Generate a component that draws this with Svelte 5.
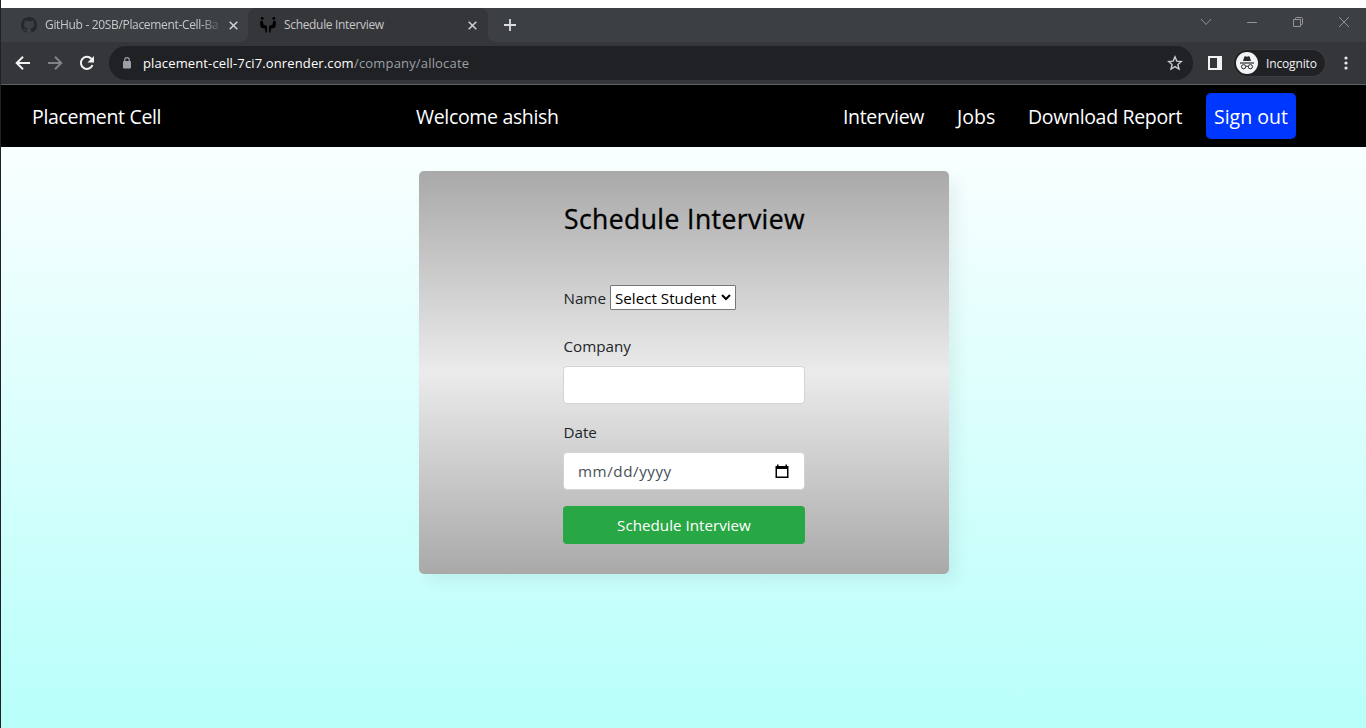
<script>
  const links = [
    { label: 'Interview', width: 81, gap: 0 },
    { label: 'Jobs', width: 40, gap: 31 },
    { label: 'Download Report', width: 155, gap: 32 }
  ];
</script>

<div class="window">
  <header class="chrome">
    <div class="tabstrip">
      <div class="tab first">
        <svg class="favicon" width="16" height="16" viewBox="0 0 16 16"><path fill="#24292e" d="M8 0C3.58 0 0 3.58 0 8c0 3.54 2.29 6.53 5.47 7.59.4.07.55-.17.55-.38v-1.49c-2.01.37-2.53-.49-2.69-.94-.09-.23-.48-.94-.82-1.13-.28-.15-.68-.52-.01-.53.63-.01 1.08.58 1.23.82.72 1.21 1.87.87 2.33.66.07-.52.28-.87.51-1.07-1.78-.2-3.64-.89-3.64-3.95 0-.87.31-1.59.82-2.15-.08-.2-.36-1.02.08-2.12 0 0 .67-.21 2.2.82a7.4 7.4 0 0 1 4 0c1.53-1.04 2.2-.82 2.2-.82.44 1.1.16 1.92.08 2.12.51.56.82 1.27.82 2.15 0 3.07-1.87 3.75-3.65 3.95.29.25.54.73.54 1.48v2.2c0 .21.15.46.55.38A8 8 0 0 0 16 8c0-4.42-3.58-8-8-8Z"/></svg>
        <span class="tabtitle faded">GitHub - 20SB/Placement-Cell-Ba</span>
        <svg class="close" width="9" height="9" viewBox="0 0 9 9"><path d="m.7.7 7.6 7.6m0-7.6L.7 8.3" fill="none" stroke="#d0d2d4" stroke-width="1.5"/></svg>
      </div>
      <div class="tab active">
        <svg class="favicon" width="16" height="16" viewBox="0 0 16 16"><g fill="#000"><circle cx="2.2" cy="1.5" r="1.4"/><path d="M.1 4.500Q1.600 3 2.800 4.300L3.700 8l2.500.5.7 1v6H5.600L5 11.500l-3-.5Q.3 10.500.1 7Z"/><circle cx="13.800" cy="1.500" r="1.400"/><path d="M15.900 4.500Q14.400 3 13.200 4.300L12.300 8l-2.500.5-.7 1v6h1.300l.6-4 3-.5q1.700-.5 1.900-4Z"/></g></svg>
        <span class="tabtitle second">Schedule Interview</span>
        <svg class="close" width="9" height="9" viewBox="0 0 9 9"><path d="m.7.7 7.6 7.6m0-7.6L.7 8.3" fill="none" stroke="#d0d2d4" stroke-width="1.5"/></svg>
      </div>
      <div class="rest">
        <svg class="plus" width="12" height="12" viewBox="0 0 12 12"><path d="M6 0v12M0 6h12" fill="none" stroke="#dadce0" stroke-width="1.8"/></svg>
        <div class="controls">
          <svg width="12" height="12" viewBox="0 0 12 12"><path d="m1 3 5 5.500L11 3"/></svg>
          <svg width="12" height="12" viewBox="0 0 12 12"><path d="M1 6.500h10"/></svg>
          <svg width="12" height="12" viewBox="0 0 12 12"><path d="M1.500 3.500h7v7h-7zM3.500 3V2.200q0-.7.7-.7h5q1.300 0 1.300 1.300v5q0 .700-.7.700H9"/></svg>
          <svg width="12" height="12" viewBox="0 0 12 12"><path d="m1 1 10 10M11 1 1 11"/></svg>
        </div>
      </div>
    </div>
    <div class="toolbar">
      <svg class="back" width="16" height="16" viewBox="0 0 16 16"><path d="M15 8H2m6-6.300L1.700 8 8 14.300" fill="none" stroke="#f1f3f4" stroke-width="2"/></svg>
      <svg class="forward" width="16" height="16" viewBox="0 0 16 16"><path d="M1 8h13M8 1.700 14.300 8 8 14.300" fill="none" stroke="#808286" stroke-width="2"/></svg>
      <svg class="reload" width="16" height="16" viewBox="0 0 16 16"><path d="M13.500 10A6 6 0 1 1 12.300 3.800L14 5.500" fill="none" stroke="#f1f3f4" stroke-width="2"/><path d="M15 1v6.500H8.500Z" fill="#f1f3f4"/></svg>
      <div class="omnibox">
        <svg class="lock" width="10" height="12" viewBox="0 0 10 12"><rect x="1" y="4" width="8" height="7.500" rx="1" fill="#9aa0a6"/><path d="M2.700 4.500V3a2.300 2.300 0 0 1 4.600 0v1.500" fill="none" stroke="#9aa0a6" stroke-width="1.200"/></svg>
        <span class="host">placement-cell-7ci7.onrender.com</span><span class="path">/company/allocate</span>
        <svg class="star" width="16" height="16" viewBox="0 0 16 16"><path d="m8 1.800 1.800 4.300 4.600.4-3.500 3 1.100 4.600-4-2.500-4 2.500 1.100-4.600-3.500-3 4.600-.4Z" fill="none" stroke="#c8cacd" stroke-width="1.400"/></svg>
      </div>
      <svg class="panel" width="14" height="14" viewBox="0 0 14 14"><path fill="#f1f3f4" fill-rule="evenodd" d="M0 0h14v14H0ZM2 2v10h7V2Z"/></svg>
      <div class="incognito">
        <svg width="22" height="22" viewBox="0 0 22 22"><circle cx="11" cy="11" r="11" fill="#f1f3f4"/><path d="M7 9 8.300 4.800q.3-.8 1.100-.5l1.600.4 1.600-.4q.800-.3 1.100.5L15 9Z" fill="#292a2d"/><path d="M4 11h14" stroke="#292a2d" stroke-width="1.200"/><g fill="none" stroke="#292a2d" stroke-width="1"><circle cx="7.600" cy="14.700" r="2.100"/><circle cx="14.400" cy="14.700" r="2.100"/><path d="M9.700 14.500q1.300-.8 2.600 0"/></g></svg>
        <span>Incognito</span>
      </div>
      <svg class="dots" width="4" height="14" viewBox="0 0 4 14"><g fill="#e8eaed"><circle cx="2" cy="2" r="1.600"/><circle cx="2" cy="7" r="1.600"/><circle cx="2" cy="12" r="1.600"/></g></svg>
    </div>
  </header>

  <nav>
    <span class="brand">Placement Cell</span>
    <span class="welcome">Welcome ashish</span>
    <div class="links">
      {#each links as link}
        <span class="link" style="width: {link.width}px; margin-left: {link.gap}px">{link.label}</span>
      {/each}
      <span class="signout">Sign out</span>
    </div>
  </nav>

  <main>
    <form class="card" onsubmit={(e) => e.preventDefault()}>
      <h1>Schedule Interview</h1>
      <div class="name">
        <span class="label">Name</span>
        <div class="select"><span>Select Student</span><svg width="10" height="7" viewBox="0 0 10 7"><path d="m1 1 4 4 4-4" fill="none" stroke="#000" stroke-width="2"/></svg></div>
      </div>
      <div class="label company">Company</div>
      <div class="field"></div>
      <div class="label date">Date</div>
      <div class="field datefield"><span>mm/dd/yyyy</span><svg width="14" height="15" viewBox="0 0 14 15"><path fill="#000" fill-rule="evenodd" d="M2 .5h1.500V2h7V.5H12V2h1.500v12H.5V2H2ZM2 5v7.500h10V5Z"/></svg></div>
      <button type="submit"><span>Schedule Interview</span></button>
    </form>
  </main>
</div>

<style>
  :global(body) { margin: 0; overflow: hidden; }
  .window, .window * { box-sizing: border-box; }
  .window {
    width: 1366px; height: 728px; padding-top: 8px;
    border-left: 1px solid #202124; background: #fff;
    font-family: "Open Sans", "Noto Sans", sans-serif;
    white-space: nowrap; overflow: hidden;
  }
  svg { display: block; flex: none; }
  .chrome { height: 77px; background: #35363a; border-bottom: 1px solid #606165; }
  .tabstrip { display: flex; height: 34px; }
  .tab { display: flex; align-items: center; height: 34px; }
  .first { width: 247px; padding-left: 20px; background: #3c4043; border-bottom-right-radius: 8px; }
  .active {
    width: 240px; padding-left: 12px;
    background:
      radial-gradient(circle at 8px 8px, #35363a 7.500px, #3c4043 8.500px) 0 0 / 8px 8px no-repeat,
      radial-gradient(circle at 0 8px, #35363a 7.500px, #3c4043 8.500px) 100% 0 / 8px 8px no-repeat,
      #35363a;
  }
  .rest { display: flex; flex: 1; padding: 0 16px 0 16px; background: #3c4043; border-bottom-left-radius: 8px; }
  .tabtitle { width: 178px; margin-left: 8px; overflow: hidden; font-size: 12px; line-height: 18px; color: #c6c8ca; letter-spacing: -.33px; }
  .faded { -webkit-mask-image: linear-gradient(90deg, #000 155px, transparent 178px); mask-image: linear-gradient(90deg, #000 155px, transparent 178px); }
  .second { width: 175px; }
  .close { margin-left: 5.500px; }
  .active .close { margin-left: 8.500px; }
  .plus { margin-top: 11px; }
  .controls { display: flex; gap: 34px; margin: 8px 0 0 auto; }
  .controls path { fill: none; stroke: #929497; stroke-width: 1; }
  .toolbar { display: flex; align-items: center; height: 42px; padding-left: 14px; }
  .forward, .reload { margin-left: 16px; }
  .omnibox { display: flex; align-items: center; width: 1084px; height: 34px; margin-left: 14px; padding-left: 13px; border-radius: 17px; background: #202124; font-size: 13px; }
  .host { margin-left: 11px; width: 211px; color: #fff; letter-spacing: .13px; }
  .path { color: #9aa0a6; letter-spacing: .17px; }
  .star { margin: 0 10px 0 auto; }
  .panel { margin-left: 15px; }
  .incognito { display: flex; align-items: center; width: 91px; height: 26px; margin-left: 12px; padding-left: 2px; border-radius: 13px; background: #202124; box-shadow: 0 0 0 1px #3c3d41; color: #f1f3f4; font-size: 12px; letter-spacing: -.15px; }
  .incognito span { margin-left: 8px; }
  .dots { margin-left: 18.500px; }
  nav { display: flex; align-items: center; height: 62px; padding: 2px 0 0 31px; background: #000; color: #fff; font-size: 19.500px; line-height: 30px; letter-spacing: -.33px; }
  .brand { width: 384px; }
  .links { display: flex; align-items: center; margin-left: auto; margin-right: 70px; }
  .link:nth-child(2) { text-indent: 2px; letter-spacing: 0; }
  .link:nth-child(3) { text-indent: 1px; }
  .signout { width: 90px; height: 46px; margin: -2px 0 0 24px; padding: 9px 0 0 8px; background: #0037ff; border-radius: 5px; letter-spacing: 0; }
  main { height: 581px; padding: 24px 0 0 418px; background: linear-gradient(#f9ffff, #b8fffa); }
  .card { width: 530px; height: 403px; padding: 0 144px; border-radius: 5px; background: linear-gradient(#a9a9a9, #ebebeb 50%, #a9a9a9); box-shadow: 8px 8px 16px rgba(0, 0, 0, .06); color: #212529; font-size: 15.200px; }
  h1 { margin: 0; padding-top: 31px; height: 114px; text-indent: 1px; color: #000; font-size: 26.500px; font-weight: 500; line-height: 34px; letter-spacing: .42px; -webkit-text-stroke: .35px #000; }
  .name { display: flex; align-items: center; height: 25px; }
  .label { line-height: 24px; text-indent: .5px; }
  .name .label { width: 47px; }
  .select { display: flex; align-items: center; width: 126px; height: 25px; padding-left: 4px; border: 1px solid #767676; border-radius: 1px; background: #fff; color: #000; }
  .select span { width: 106px; }
  .company { margin-top: 24px; }
  .field { width: 242px; height: 38px; margin-top: 8px; border: 1px solid #ced4da; border-radius: 4px; background: #fff; }
  .date { margin-top: 16px; }
  .datefield { display: flex; align-items: center; justify-content: space-between; padding: 0 15px 0 14px; color: #495057; letter-spacing: .55px; }
  button { display: block; width: 242px; height: 38px; margin-top: 16px; padding: 0; border: 0; border-radius: 4px; background: #28a745; color: #fff; font: 15.200px/24px "Open Sans", "Noto Sans", sans-serif; }
</style>
